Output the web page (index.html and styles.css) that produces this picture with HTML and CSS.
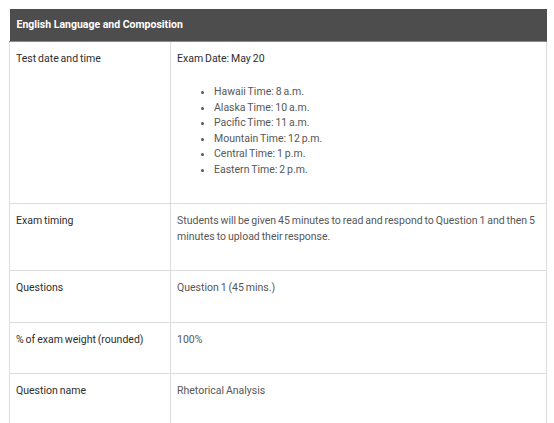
FILE: index.html
```html
<!DOCTYPE html>
<html>
<head>
<meta charset="utf-8">
<link rel="stylesheet" href="styles.css">
</head>
<body>
<table class="exam">
  <colgroup>
    <col class="col-label">
    <col class="col-value">
  </colgroup>
  <thead>
    <tr><th colspan="2">English Language and Composition</th></tr>
  </thead>
  <tbody>
    <tr>
      <td class="label">Test date and time</td>
      <td class="value">
        <p class="date">Exam Date: May 20</p>
        <ul>
          <li>Hawaii Time: 8 a.m.</li>
          <li>Alaska Time: 10 a.m.</li>
          <li>Pacific Time: 11 a.m.</li>
          <li>Mountain Time: 12 p.m.</li>
          <li>Central Time: 1 p.m.</li>
          <li>Eastern Time: 2 p.m.</li>
        </ul>
      </td>
    </tr>
    <tr>
      <td class="label">Exam timing</td>
      <td class="value">Students will be given 45 minutes to read and respond to Question 1 and then 5 minutes to upload their response.</td>
    </tr>
    <tr>
      <td class="label">Questions</td>
      <td class="value">Question 1 (45 mins.)</td>
    </tr>
    <tr>
      <td class="label">% of exam weight (rounded)</td>
      <td class="value">100%</td>
    </tr>
    <tr>
      <td class="label">Question name</td>
      <td class="value">Rhetorical Analysis</td>
    </tr>
  </tbody>
</table>
</body>
</html>
```
FILE: styles.css
```css
html, body {
  margin: 0;
  padding: 0;
  background: #fff;
}
body {
  padding: 9px 0 0 9px;
  font-family: Roboto, "Liberation Sans", sans-serif;
  font-size: 10.5px;
  line-height: 15.5px;
  color: #555;
}
.exam {
  border-collapse: collapse;
  width: 538px;
  table-layout: fixed;
}
.col-label {
  width: 161px;
}
.exam th {
  background: #4d4d4d;
  color: #fff;
  font-weight: 700;
  text-align: left;
  height: 32px;
  padding: 0 7px;
  box-sizing: border-box;
  border-bottom: 1px solid #8a8a8a;
  font-size: 10.5px;
}
.exam td {
  border: 1px solid #dddddd;
  vertical-align: top;
  padding: 9px 6px 26px;
  word-spacing: -0.7px;
}
.exam td.label {
  color: #2e2e2e;
}
.exam td.value {
  color: #575757;
}
.date {
  margin: 0 0 18px;
  color: #2e2e2e;
}
.exam ul {
  margin: 0;
  padding-left: 37px;
}
```
